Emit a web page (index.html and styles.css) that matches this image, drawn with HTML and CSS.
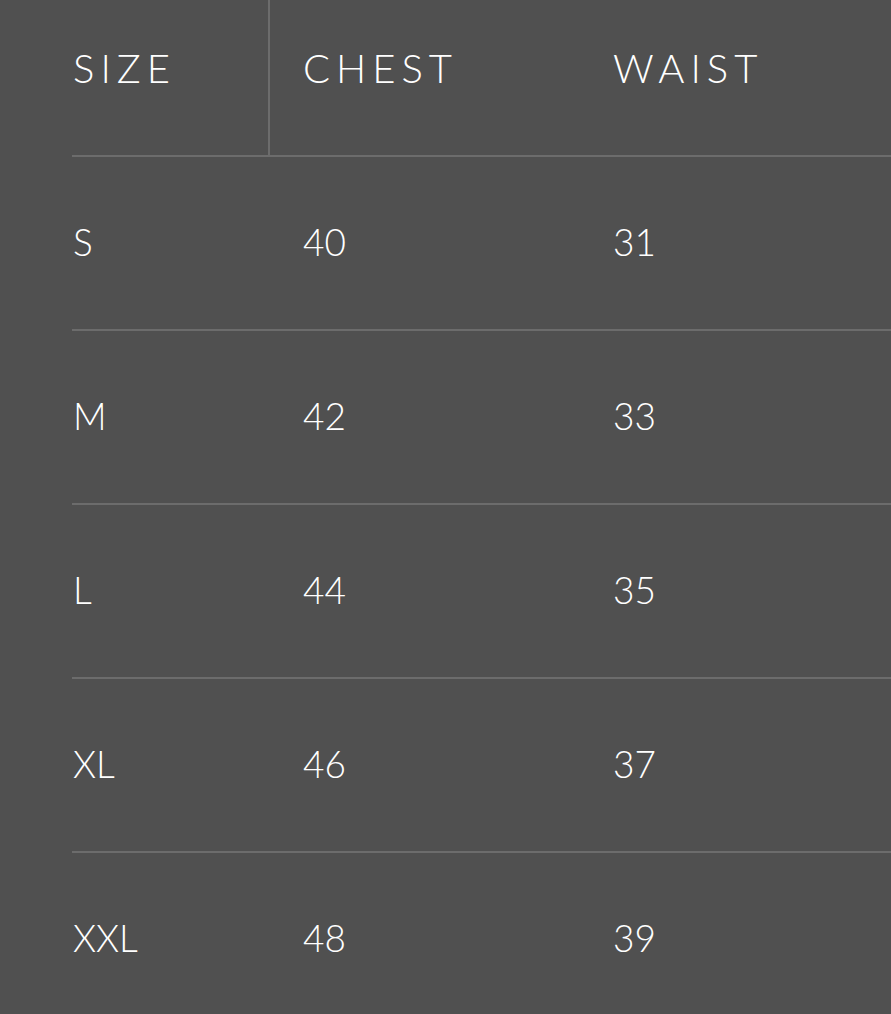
FILE: index.html
```html
<!DOCTYPE html>
<html>
<head>
<meta charset="utf-8">
<link rel="stylesheet" href="styles.css">
</head>
<body>
<div class="table">
  <div class="row head">
    <div class="cell first">SIZE</div>
    <div class="cell">CHEST</div>
    <div class="cell">WAIST</div>
  </div>
  <div class="row"><div class="cell">S</div><div class="cell">40</div><div class="cell">31</div></div>
  <div class="row"><div class="cell">M</div><div class="cell">42</div><div class="cell">33</div></div>
  <div class="row"><div class="cell">L</div><div class="cell">44</div><div class="cell">35</div></div>
  <div class="row"><div class="cell">XL</div><div class="cell">46</div><div class="cell">37</div></div>
  <div class="row"><div class="cell">XXL</div><div class="cell">48</div><div class="cell">39</div></div>
</div>
</body>
</html>
```
FILE: styles.css
```css
html, body {
  margin: 0;
  padding: 0;
  background: #505050;
  overflow: hidden;
}
body {
  height: 1014px;
  font-family: Lato, "Open Sans", sans-serif;
  font-weight: 300;
  color: #ffffff;
}
.table {
  margin-left: 72px;
}
.row {
  display: grid;
  grid-template-columns: 198px 310px 1fr;
  height: 172px;
  border-bottom: 2px solid #6c6c6c;
  align-items: center;
  font-size: 37px;
}
.row .cell {
  padding-bottom: 4px;
}
.row:last-child {
  border-bottom: none;
}
.row .cell:nth-child(2),
.row .cell:nth-child(3) {
  padding-left: 33px;
}
.row .cell:first-child {
  padding-left: 1px;
}
.head {
  height: 155px;
  align-items: stretch;
  font-size: 40px;
  letter-spacing: 0.15em;
}
.head .cell {
  padding-top: 44px;
  padding-bottom: 0;
  line-height: 48px;
}
.head .first {
  border-right: 2px solid #6c6c6c;
}
```
